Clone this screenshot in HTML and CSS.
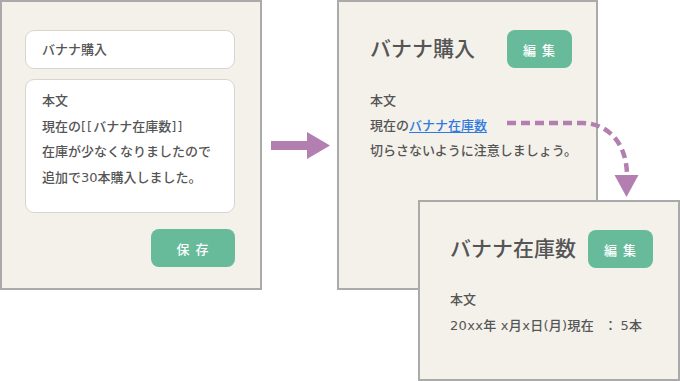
FILE: index.html
```html
<!DOCTYPE html>
<html lang="ja">
<head>
<meta charset="utf-8">
<link rel="stylesheet" href="styles.css">
</head>
<body>
<div class="canvas">
  <div class="panel panel-edit">
    <div class="field field-title">バナナ購入</div>
    <div class="field field-body">
      <div>本文</div>
      <div>現在の<span class="br">[[</span>バナナ在庫数<span class="br">]]</span></div>
      <div>在庫が少なくなりましたので</div>
      <div>追加で30本購入しました。</div>
    </div>
    <div class="actions"><span class="btn btn-save">保 存</span></div>
  </div>

  <svg class="arrow-solid" width="60" height="30" viewBox="0 0 60 30">
    <polygon points="0,9 36,9 36,0 59,13.5 36,27 36,18 0,18" fill="#b27fb0"/>
  </svg>

  <div class="panel panel-view">
    <div class="head">
      <h1 class="title">バナナ購入</h1>
      <span class="btn btn-edit">編 集</span>
    </div>
    <div class="body">
      <div>本文</div>
      <div>現在の<a class="link" href="#">バナナ在庫数</a></div>
      <div>切らさないように注意しましょう。</div>
    </div>
  </div>

  <div class="panel panel-popup">
    <div class="head">
      <h1 class="title">バナナ在庫数</h1>
      <span class="btn btn-edit">編 集</span>
    </div>
    <div class="body">
      <div>本文</div>
      <div class="stock">20xx年 x月x日(月)現在<span class="colon">：</span>5本</div>
    </div>
  </div>

  <svg class="arrow-dashed" width="680" height="381" viewBox="0 0 680 381">
    <path d="M507 123 H582 C607 123 627 142 627 176" fill="none" stroke="#b27fb0" stroke-width="4.5" stroke-dasharray="9 5"/>
    <polygon points="614.5,175 638.5,175 626.5,197" fill="#b27fb0"/>
  </svg>
</div>
</body>
</html>
```

FILE: styles.css
```css
* { box-sizing: border-box; }
html, body { margin: 0; padding: 0; background: #fff; }
body {
  font-family: "DejaVu Sans", "Noto Sans CJK JP", sans-serif;
  color: #555;
  font-size: 13px;
  font-weight: 500;
}
.canvas {
  position: relative;
  width: 680px;
  height: 381px;
  overflow: hidden;
}
.panel {
  position: absolute;
  background: #f4f1eb;
  border: 2px solid #aaaaaa;
}
.panel-edit {
  left: 0; top: 0; width: 262px; height: 290px;
  padding: 28px 0 0 23px;
  display: flex;
  flex-direction: column;
}
.field {
  width: 210px;
  background: #fff;
  border: 1px solid #d8d5cf;
  border-radius: 9px;
  padding-left: 16px;
}
.field-title {
  height: 39px;
  display: flex;
  align-items: center;
  line-height: 1;
}
.field-body {
  margin-top: 10px;
  height: 134px;
  padding-top: 8px;
  line-height: 25.5px;
}
.br { letter-spacing: 1px; }
.actions {
  width: 210px;
  margin-top: 16px;
  display: flex;
  justify-content: flex-end;
}
.btn {
  display: flex;
  align-items: center;
  justify-content: center;
  background: #67bb9b;
  color: #fff;
  border-radius: 8px;
  height: 38px;
  font-size: 13px;
  letter-spacing: 1px;
}
.btn-save { width: 84px; }
.btn-edit { width: 65px; }
.arrow-solid {
  position: absolute;
  left: 271px; top: 132px;
}
.panel-view {
  left: 337px; top: 0; width: 261px; height: 290px;
  padding: 28px 0 0 31px;
}
.panel-popup {
  left: 418px; top: 200px; width: 262px; height: 181px;
  padding: 28px 0 0 30px;
}
.head {
  display: flex;
  align-items: center;
  height: 38px;
}
.title {
  margin: 0;
  font-size: 21px;
  font-weight: 500;
  line-height: 1;
}
.panel-view .title { width: 137px; }
.panel-popup .title { width: 138px; }
.body {
  margin-top: 20px;
  line-height: 25px;
}
.panel-popup .body { margin-top: 19px; line-height: 26px; }
.stock { letter-spacing: 0.3px; }
.colon { margin: 0 3px 0 10px; }
.link {
  color: #2e7ae0;
  text-decoration: underline;
  text-underline-offset: 2px;
}
.arrow-dashed {
  position: absolute;
  left: 0; top: 0;
  pointer-events: none;
}
```
